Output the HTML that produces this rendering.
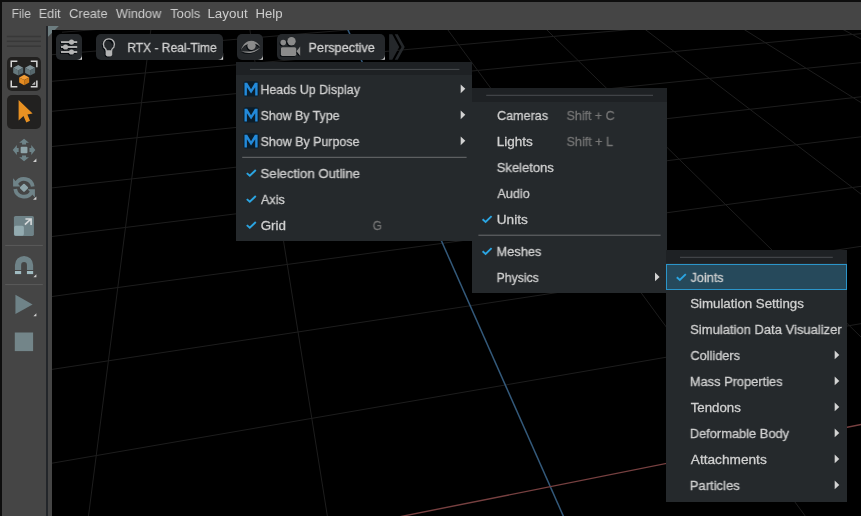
<!DOCTYPE html>
<html><head><meta charset="utf-8"><title>Viewport</title>
<style>
html,body{margin:0;padding:0;background:#000;}
body{width:861px;height:516px;overflow:hidden;position:relative;font-family:"Liberation Sans",sans-serif;}
#win{position:absolute;left:0;top:0;width:861px;height:516px;background:#454545;overflow:hidden;}
#bt{position:absolute;left:0;top:0;width:861px;height:2px;background:#0e0e0e;}
#bl{position:absolute;left:0;top:0;width:2px;height:516px;background:#0e0e0e;}
#vp{position:absolute;left:52px;top:30px;width:809px;height:486px;background:#000;}
#fl{position:absolute;left:46.2px;top:26px;width:1.7px;height:490px;background:#23262a;}
.t{position:absolute;left:0;white-space:nowrap;will-change:transform;line-height:16px;height:16px;transform-origin:0 0;display:block;}
.mb{font-size:13.2px;}
.mi{font-size:13.2px;-webkit-text-stroke:0.3px currentColor;}
.menu{position:absolute;background:#25292c;}
.mh{position:absolute;left:0;top:0;right:0;background:#1e2124;}
.btn{position:absolute;background:#25282b;border-radius:5px;}
.tb{position:absolute;background:#222120;border-radius:5px;}
#sel{position:absolute;left:666.2px;top:264.2px;width:180.8px;height:25.8px;box-sizing:border-box;background:#26495b;border:1.5px solid #2b95ca;}
svg{position:absolute;left:0;top:0;}
</style></head><body>
<div id="win">
<div id="vp"></div>
<svg width="861" height="516" viewBox="0 0 861 516">
<defs><clipPath id="vpc"><rect x="52" y="30" width="809" height="486"/></clipPath></defs>
<g clip-path="url(#vpc)" stroke="#1d1d1d" stroke-width="1" fill="none">
<line x1="52.0" y1="33.0" x2="900.0" y2="-33.9"/><line x1="52.0" y1="54.7" x2="900.0" y2="-16.2"/><line x1="52.0" y1="81.3" x2="900.0" y2="5.4"/><line x1="52.0" y1="111.3" x2="900.0" y2="29.9"/><line x1="52.0" y1="146.5" x2="900.0" y2="58.6"/><line x1="52.0" y1="187.9" x2="900.0" y2="92.4"/><line x1="52.0" y1="236.5" x2="900.0" y2="132.0"/><line x1="52.0" y1="296.5" x2="900.0" y2="181.0"/><line x1="52.0" y1="369.4" x2="900.0" y2="240.4"/><line x1="52.0" y1="463.2" x2="900.0" y2="316.9"/><line x1="56.0" y1="20.0" x2="-156.2" y2="530.0"/><line x1="152.1" y1="20.0" x2="86.7" y2="530.0"/><line x1="248.3" y1="20.0" x2="329.6" y2="530.0"/><line x1="440.6" y1="20.0" x2="815.5" y2="530.0"/><line x1="536.7" y1="20.0" x2="1058.4" y2="530.0"/><line x1="632.8" y1="20.0" x2="1301.4" y2="530.0"/><line x1="729.0" y1="20.0" x2="1544.3" y2="530.0"/><line x1="825.1" y1="20.0" x2="1787.2" y2="530.0"/><line x1="343.6" y1="20" x2="569.5" y2="530" stroke="#33597a" stroke-width="1.5"/><line x1="40" y1="588.7" x2="900" y2="416.7" stroke="#774040" stroke-width="1.4"/>
</g>
<path d="M47.8 25.9 H58.9 L47.8 36.9 Z" fill="#6d7d80"/>
<rect x="52" y="30" width="10" height="10" fill="#000" clip-path="url(#vpc)"/>
<path d="M82.0 53.3 V59.8 H75.5 Z" fill="#d8d8d8"/><path d="M223.1 53.3 V59.8 H216.6 Z" fill="#d8d8d8"/><path d="M262.9 53.3 V59.8 H256.4 Z" fill="#d8d8d8"/><path d="M384.9 53.3 V59.8 H378.4 Z" fill="#d8d8d8"/>
</svg>
<div id="fl"></div>
<div id="bt"></div><div id="bl"></div>
<!-- viewport toolbar buttons -->
<div class="btn" style="left:56.2px;top:34px;width:25.7px;height:25.7px"></div>
<div class="btn" style="left:96.1px;top:34px;width:126.9px;height:25.7px"></div>
<div class="btn" style="left:237.3px;top:34px;width:25.5px;height:25.7px"></div>
<div class="btn" style="left:277.3px;top:34px;width:107.5px;height:25.7px"></div>
<!-- left toolbar buttons -->
<div class="tb" style="left:6.9px;top:56.9px;width:34.1px;height:33.9px"></div>
<div class="tb" style="left:6.9px;top:94.9px;width:34.1px;height:33.9px"></div>
<div class="menu" style="left:236.4px;top:61.8px;width:235.7px;height:179.6px"><div class="mh" style="height:13.6px"></div></div><div class="menu" style="left:472.2px;top:88.2px;width:194.8px;height:205.0px"><div class="mh" style="height:13.6px"></div></div><div class="menu" style="left:666.2px;top:249.8px;width:180.8px;height:251.8px"><div class="mh" style="height:13.6px"></div></div>
<div id="sel"></div>
<svg width="861" height="516" viewBox="0 0 861 516">
<rect x="250.0" y="68.9" width="209.4" height="1" fill="#4a4d50"/><rect x="486.2" y="94.8" width="166.8" height="1" fill="#4a4d50"/><rect x="680.0" y="256.8" width="152.8" height="1" fill="#4a4d50"/><rect x="242.2" y="156.8" width="224.4" height="1" fill="#6b6d6f"/><rect x="478.4" y="234.7" width="182.2" height="1" fill="#6b6d6f"/><path d="M460.7 84.4 L465.3 88.8 L460.7 93.2 Z" fill="#d2d2d2"/><path d="M460.7 110.4 L465.3 114.8 L460.7 119.2 Z" fill="#d2d2d2"/><path d="M460.7 136.4 L465.3 140.8 L460.7 145.2 Z" fill="#d2d2d2"/><path d="M655.0 272.5 L659.6 276.9 L655.0 281.3 Z" fill="#d2d2d2"/><path d="M834.7 350.5 L839.3 354.9 L834.7 359.3 Z" fill="#d2d2d2"/><path d="M834.7 376.5 L839.3 380.9 L834.7 385.3 Z" fill="#d2d2d2"/><path d="M834.7 402.5 L839.3 406.9 L834.7 411.3 Z" fill="#d2d2d2"/><path d="M834.7 428.5 L839.3 432.9 L834.7 437.3 Z" fill="#d2d2d2"/><path d="M834.7 454.5 L839.3 458.9 L834.7 463.3 Z" fill="#d2d2d2"/><path d="M834.7 480.5 L839.3 484.9 L834.7 489.3 Z" fill="#d2d2d2"/><path d="M246.8 173.1 L249.8 175.8 L255.8 170.0" fill="none" stroke="#2ba5e2" stroke-width="1.9" stroke-linejoin="miter"/><path d="M246.8 199.1 L249.8 201.8 L255.8 196.0" fill="none" stroke="#2ba5e2" stroke-width="1.9" stroke-linejoin="miter"/><path d="M246.8 225.1 L249.8 227.8 L255.8 222.0" fill="none" stroke="#2ba5e2" stroke-width="1.9" stroke-linejoin="miter"/><path d="M482.6 219.2 L485.6 221.9 L491.6 216.1" fill="none" stroke="#2ba5e2" stroke-width="1.9" stroke-linejoin="miter"/><path d="M482.6 251.2 L485.6 253.9 L491.6 248.1" fill="none" stroke="#2ba5e2" stroke-width="1.9" stroke-linejoin="miter"/><path d="M676.8 277.2 L679.8 279.9 L685.8 274.1" fill="none" stroke="#2ba5e2" stroke-width="1.9" stroke-linejoin="miter"/><rect x="243.4" y="81.2" width="15.4" height="15.4" rx="2.6" fill="#0c1e2b"/><path d="M244.50 95.50 L244.50 82.80 L247.20 82.80 L251.05 89.20 L254.90 82.80 L257.60 82.80 L257.60 95.50 L255.20 95.50 L255.20 87.20 L251.05 93.40 L246.90 87.20 L246.90 95.50 Z" fill="#238ada"/><rect x="243.4" y="107.2" width="15.4" height="15.4" rx="2.6" fill="#0c1e2b"/><path d="M244.50 121.50 L244.50 108.80 L247.20 108.80 L251.05 115.20 L254.90 108.80 L257.60 108.80 L257.60 121.50 L255.20 121.50 L255.20 113.20 L251.05 119.40 L246.90 113.20 L246.90 121.50 Z" fill="#238ada"/><rect x="243.4" y="133.2" width="15.4" height="15.4" rx="2.6" fill="#0c1e2b"/><path d="M244.50 147.50 L244.50 134.80 L247.20 134.80 L251.05 141.20 L254.90 134.80 L257.60 134.80 L257.60 147.50 L255.20 147.50 L255.20 139.20 L251.05 145.40 L246.90 139.20 L246.90 147.50 Z" fill="#238ada"/>
<rect x="6.9" y="35.75" width="34" height="1.5" fill="#383838"/><rect x="6.9" y="40.55" width="34" height="1.5" fill="#383838"/><rect x="6.9" y="45.45" width="34" height="1.5" fill="#383838"/><rect x="5.2" y="244.90" width="37.6" height="1" fill="#5a5a5a"/><rect x="5.2" y="284.10" width="37.6" height="1" fill="#5a5a5a"/><path d="M35.2 81.4 V84.8 H31.8 Z" fill="#b8b8b8"/><path d="M36.4 158.5 V161.9 H33.0 Z" fill="#cfcfcf"/><path d="M36.4 196.4 V199.8 H33.0 Z" fill="#cfcfcf"/><path d="M36.4 274.3 V277.3 H33.4 Z" fill="#cfcfcf"/><path d="M36.4 313.3 V316.3 H33.4 Z" fill="#cfcfcf"/><g fill="none" stroke="#d6d6d6" stroke-width="1.5"><path d="M11.25 67.25 V61.15 H17.35"/><path d="M30.75 61.15 H36.85 V67.25"/><path d="M11.25 80.55 V86.65 H17.35"/><path d="M30.75 86.65 H36.85 V80.55"/></g><path d="M18.20 65.00 L23.20 67.70 L18.20 70.40 L13.20 67.70 Z" fill="#7f9197"/><path d="M13.20 67.70 L18.20 70.30 L18.20 75.60 L13.20 72.90 Z" fill="#65787d"/><path d="M23.20 67.70 L18.20 70.30 L18.20 75.60 L23.20 72.90 Z" fill="#56676c"/><path d="M30.10 65.00 L35.10 67.70 L30.10 70.40 L25.10 67.70 Z" fill="#7f9197"/><path d="M25.10 67.70 L30.10 70.30 L30.10 75.60 L25.10 72.90 Z" fill="#65787d"/><path d="M35.10 67.70 L30.10 70.30 L30.10 75.60 L35.10 72.90 Z" fill="#56676c"/><path d="M24.20 74.70 L29.20 77.40 L24.20 80.10 L19.20 77.40 Z" fill="#f39d35"/><path d="M19.20 77.40 L24.20 80.00 L24.20 85.30 L19.20 82.60 Z" fill="#e58c22"/><path d="M29.20 77.40 L24.20 80.00 L24.20 85.30 L29.20 82.60 Z" fill="#cf7b18"/><path d="M18.6 100.0 L18.6 120.4 L23.5 116.0 L26.3 122.5 L30.0 120.8 L27.4 114.6 L32.6 113.5 Z" fill="#e89122"/><rect x="20.65" y="146.70" width="6.8" height="6.6" rx="1" fill="#8fa5aa"/><path d="M0 -11.3 L4.9 -7.2 L2 -7.2 L2 -5.4 L-2 -5.4 L-2 -7.2 L-4.9 -7.2 Z" fill="#6e8489" transform="translate(24.05 150.00) rotate(0)"/><path d="M0 -11.3 L4.9 -7.2 L2 -7.2 L2 -5.4 L-2 -5.4 L-2 -7.2 L-4.9 -7.2 Z" fill="#6e8489" transform="translate(24.05 150.00) rotate(90)"/><path d="M0 -11.3 L4.9 -7.2 L2 -7.2 L2 -5.4 L-2 -5.4 L-2 -7.2 L-4.9 -7.2 Z" fill="#6e8489" transform="translate(24.05 150.00) rotate(180)"/><path d="M0 -11.3 L4.9 -7.2 L2 -7.2 L2 -5.4 L-2 -5.4 L-2 -7.2 L-4.9 -7.2 Z" fill="#6e8489" transform="translate(24.05 150.00) rotate(270)"/><path d="M10.60 -1.49 A10.70 10.70 0 0 0 -9.27 -5.35 L-6.06 -3.50 A7.00 7.00 0 0 1 6.93 -0.97 Z M-10.9 -9.6 L-10.9 -1.4 L-3.6 -1.4 Z" fill="#6f8388" transform="translate(24.00 187.80)"/><path d="M10.60 -1.49 A10.70 10.70 0 0 0 -9.27 -5.35 L-6.06 -3.50 A7.00 7.00 0 0 1 6.93 -0.97 Z M-10.9 -9.6 L-10.9 -1.4 L-3.6 -1.4 Z" fill="#6f8388" transform="translate(24.00 187.80) rotate(180)"/><rect x="-3.2" y="-3.2" width="6.4" height="6.4" rx="1" fill="#8fa5aa" transform="translate(24.00 187.80) rotate(45)"/><rect x="13.9" y="215.9" width="20" height="20" rx="1.6" fill="#6f8388"/><rect x="14.1" y="225.8" width="9.8" height="9.9" rx="1.6" fill="#93abb0"/><path d="M24.9 224.7 L31.0 218.9 M25.4 219.0 H31.1 V224.9" fill="none" stroke="#d6d9da" stroke-width="1.6"/><path d="M14.95 270 V265.00 A9.1 9.1 0 0 1 33.15 265.00 V270 H26.95 V265.00 A2.9 2.9 0 0 0 21.15 265.00 V270 Z" fill="#6f8388"/><rect x="14.95" y="271" width="6.2" height="3.1" fill="#a0bbc1"/><rect x="26.95" y="271" width="6.2" height="3.1" fill="#a0bbc1"/><path d="M15.45 294.8 V314.1 L32.6 304.45 Z" fill="#6f8388"/><rect x="14.8" y="332.5" width="18.3" height="18.6" fill="#738589"/><rect x="60.10" y="42.05" width="16.2" height="1.9" fill="#05090d"/><circle cx="70.60" cy="43.00" r="2.6" fill="#05090d"/><rect x="60.10" y="46.95" width="16.2" height="1.9" fill="#05090d"/><circle cx="64.60" cy="47.90" r="2.6" fill="#05090d"/><rect x="60.10" y="51.95" width="16.2" height="1.9" fill="#05090d"/><circle cx="70.60" cy="52.90" r="2.6" fill="#05090d"/><rect x="61.00" y="41.15" width="16.2" height="1.9" fill="#b4b4b4"/><circle cx="71.50" cy="42.10" r="2.6" fill="#b4b4b4"/><rect x="61.00" y="46.05" width="16.2" height="1.9" fill="#b4b4b4"/><circle cx="65.50" cy="47.00" r="2.6" fill="#b4b4b4"/><rect x="61.00" y="51.05" width="16.2" height="1.9" fill="#b4b4b4"/><circle cx="71.50" cy="52.00" r="2.6" fill="#b4b4b4"/><path d="M105.40 51.70 C105.40 49.70 103.80 48.90 103.10 48.10 A5.6 5.6 0 1 1 112.90 48.10 C112.20 48.90 110.60 49.70 110.60 51.70" fill="none" stroke="#05090d" stroke-width="1.4"/><path d="M104.70 51.10 H111.30 V55.10 Q111.30 57.40 108.00 57.40 Q104.70 57.40 104.70 55.10 Z" fill="#05090d"/><path d="M106.30 50.80 C106.30 48.80 104.70 48.00 104.00 47.20 A5.6 5.6 0 1 1 113.80 47.20 C113.10 48.00 111.50 48.80 111.50 50.80" fill="none" stroke="#b4b4b4" stroke-width="1.4"/><path d="M105.60 50.20 H112.20 V54.20 Q112.20 56.50 108.90 56.50 Q105.60 56.50 105.60 54.20 Z" fill="#b4b4b4"/><path d="M108.6 40.6 Q111.6 40.6 112.0 43.6" fill="none" stroke="#05090d" stroke-width="1"/><path d="M239.90 51.10 C244.10 38.90 255.10 39.50 259.50 47.90 C254.60 42.50 245.10 42.70 239.90 51.10 Z" fill="#05090d"/><path d="M240.50 51.90 C246.10 55.30 255.10 54.30 259.30 48.50 C254.60 52.30 247.10 53.30 240.50 51.90 Z" fill="#05090d"/><circle cx="250.60" cy="46.70" r="4.2" fill="#05090d"/><path d="M240.80 50.20 C245.00 38.00 256.00 38.60 260.40 47.00 C255.50 41.60 246.00 41.80 240.80 50.20 Z" fill="#8b8b8b"/><path d="M241.40 51.00 C247.00 54.40 256.00 53.40 260.20 47.60 C255.50 51.40 248.00 52.40 241.40 51.00 Z" fill="#8b8b8b"/><circle cx="251.50" cy="45.80" r="4.2" fill="#8b8b8b"/><rect x="279.90" y="48.10" width="15.4" height="8.7" rx="1.6" fill="#05090d"/><circle cx="282.30" cy="43.50" r="2.8" fill="#05090d"/><circle cx="290.60" cy="42.20" r="4.2" fill="#05090d"/><path d="M295.50 52.20 L299.30 47.50 V56.60 Z" fill="#05090d"/><rect x="280.80" y="47.20" width="15.4" height="8.7" rx="1.6" fill="#8b8b8b"/><circle cx="283.20" cy="42.60" r="2.8" fill="#8b8b8b"/><circle cx="291.50" cy="41.30" r="4.2" fill="#8b8b8b"/><path d="M296.40 51.30 L300.20 46.60 V55.70 Z" fill="#8b8b8b"/><path d="M389.1 34.3 H392.3 L399.2 47 L392.3 59.7 H389.1 Z" fill="#25282b"/><path d="M394.7 34.3 H397.7 L404.7 47 L397.7 59.7 H394.7 L401.6 47 Z" fill="#25282b"/>
</svg>
<span class="t mb" id="t0" style="top:6px;color:#cdcdcd;transform:matrix(0.9049,0,0,1,11.61,0)">File</span>
<span class="t mb" id="t1" style="top:6px;color:#cdcdcd;transform:matrix(0.9673,0,0,1,38.67,0)">Edit</span>
<span class="t mb" id="t2" style="top:6px;color:#cdcdcd;transform:matrix(0.9748,0,0,1,69.09,0)">Create</span>
<span class="t mb" id="t3" style="top:6px;color:#cdcdcd;transform:matrix(0.9653,0,0,1,115.91,0)">Window</span>
<span class="t mb" id="t4" style="top:6px;color:#cdcdcd;transform:matrix(0.9682,0,0,1,170.35,0)">Tools</span>
<span class="t mb" id="t5" style="top:6px;color:#cdcdcd;transform:matrix(1.0151,0,0,1,207.41,0)">Layout</span>
<span class="t mb" id="t6" style="top:6px;color:#cdcdcd;transform:matrix(1.0014,0,0,1,255.41,0)">Help</span>
<span class="t mi" id="t7" style="top:40px;color:#d0d0d0;transform:matrix(0.9112,0,0,1,127.35,0)">RTX - Real-Time</span>
<span class="t mi" id="t8" style="top:40px;color:#d0d0d0;transform:matrix(0.9646,0,0,1,308.42,0)">Perspective</span>
<span class="t mi" id="t9" style="top:82px;color:#d0d0d0;transform:matrix(0.9433,0,0,1,260.41,0)">Heads Up Display</span>
<span class="t mi" id="t10" style="top:108px;color:#d0d0d0;transform:matrix(0.9383,0,0,1,260.60,0)">Show By Type</span>
<span class="t mi" id="t11" style="top:134px;color:#d0d0d0;transform:matrix(0.9431,0,0,1,260.59,0)">Show By Purpose</span>
<span class="t mi" id="t12" style="top:166px;color:#d0d0d0;transform:matrix(0.9983,0,0,1,260.49,0)">Selection Outline</span>
<span class="t mi" id="t13" style="top:192px;color:#d0d0d0;transform:matrix(0.9588,0,0,1,260.92,0)">Axis</span>
<span class="t mi" id="t14" style="top:218px;color:#d0d0d0;transform:matrix(1.0159,0,0,1,260.64,0)">Grid</span>
<span class="t mi" id="t15" style="top:218px;color:#757575;transform:matrix(0.8786,0,0,1,372.74,0)">G</span>
<span class="t mi" id="t16" style="top:108px;color:#d0d0d0;transform:matrix(0.9520,0,0,1,497.10,0)">Cameras</span>
<span class="t mi" id="t17" style="top:108px;color:#757575;transform:matrix(0.9410,0,0,1,566.58,0)">Shift + C</span>
<span class="t mi" id="t18" style="top:134px;color:#d0d0d0;transform:matrix(1.0247,0,0,1,496.63,0)">Lights</span>
<span class="t mi" id="t19" style="top:134px;color:#757575;transform:matrix(0.9520,0,0,1,566.56,0)">Shift + L</span>
<span class="t mi" id="t20" style="top:160px;color:#d0d0d0;transform:matrix(0.9854,0,0,1,496.72,0)">Skeletons</span>
<span class="t mi" id="t21" style="top:186px;color:#d0d0d0;transform:matrix(0.9577,0,0,1,497.38,0)">Audio</span>
<span class="t mi" id="t22" style="top:212px;color:#d0d0d0;transform:matrix(1.0309,0,0,1,496.75,0)">Units</span>
<span class="t mi" id="t23" style="top:244px;color:#d0d0d0;transform:matrix(0.9730,0,0,1,496.48,0)">Meshes</span>
<span class="t mi" id="t24" style="top:270px;color:#d0d0d0;transform:matrix(0.9308,0,0,1,496.55,0)">Physics</span>
<span class="t mi" id="t25" style="top:270px;color:#d0d0d0;transform:matrix(0.9595,0,0,1,690.58,0)">Joints</span>
<span class="t mi" id="t26" style="top:296px;color:#d0d0d0;transform:matrix(1.0076,0,0,1,690.13,0)">Simulation Settings</span>
<span class="t mi" id="t27" style="top:322px;color:#d0d0d0;transform:matrix(0.9860,0,0,1,690.16,0)">Simulation Data Visualizer</span>
<span class="t mi" id="t28" style="top:348px;color:#d0d0d0;transform:matrix(0.9633,0,0,1,690.50,0)">Colliders</span>
<span class="t mi" id="t29" style="top:374px;color:#d0d0d0;transform:matrix(0.9735,0,0,1,689.83,0)">Mass Properties</span>
<span class="t mi" id="t30" style="top:400px;color:#d0d0d0;transform:matrix(1.0063,0,0,1,690.69,0)">Tendons</span>
<span class="t mi" id="t31" style="top:426px;color:#d0d0d0;transform:matrix(0.9744,0,0,1,689.79,0)">Deformable Body</span>
<span class="t mi" id="t32" style="top:452px;color:#d0d0d0;transform:matrix(1.0356,0,0,1,690.81,0)">Attachments</span>
<span class="t mi" id="t33" style="top:478px;color:#d0d0d0;transform:matrix(0.9898,0,0,1,689.71,0)">Particles</span>

</div>
</body></html>
